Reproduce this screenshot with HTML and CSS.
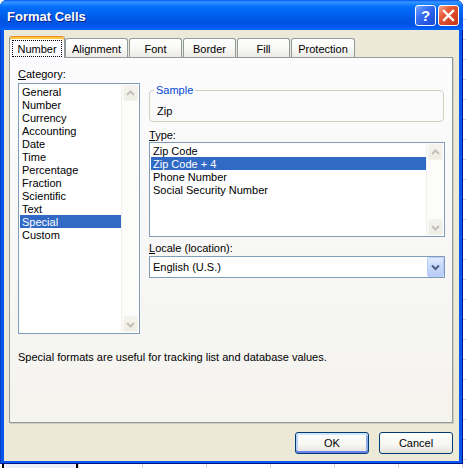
FILE: index.html
```html
<!DOCTYPE html>
<html>
<head>
<meta charset="utf-8">
<title>Format Cells</title>
<link rel="stylesheet" href="styles.css">
</head>
<body>
<div class="window">
  <div class="titlebar">
    <span class="title">Format Cells</span>
    <div class="tb-buttons">
      <span class="tb-btn help">?</span>
      <span class="tb-btn close"><svg width="19" height="19" viewBox="0 0 19 19"><path d="M5 5 L14 14 M14 5 L5 14" stroke="#fff" stroke-width="2.4" stroke-linecap="square"/></svg></span>
    </div>
  </div>
  <div class="frame">
    <div class="tabs">
      <div class="tab selected"><span class="focus">Number</span></div>
      <div class="tab t-align">Alignment</div>
      <div class="tab t-font">Font</div>
      <div class="tab t-border">Border</div>
      <div class="tab t-fill">Fill</div>
      <div class="tab t-prot">Protection</div>
    </div>
    <div class="panel">
      <div class="columns">
        <div class="col-left">
          <div class="label gap3"><u>C</u>ategory:</div>
          <div class="listbox cat">
            <ul class="items">
              <li>General</li>
              <li>Number</li>
              <li>Currency</li>
              <li>Accounting</li>
              <li>Date</li>
              <li>Time</li>
              <li>Percentage</li>
              <li>Fraction</li>
              <li>Scientific</li>
              <li>Text</li>
              <li class="sel">Special</li>
              <li>Custom</li>
            </ul>
            <div class="scroll">
              <span class="sbtn"><svg width="13" height="13" viewBox="0 0 13 13"><path d="M3 8 L6.5 4.5 L10 8" fill="none" stroke="#C3C1B5" stroke-width="2"/></svg></span>
              <span class="sbtn"><svg width="13" height="13" viewBox="0 0 13 13"><path d="M3 5 L6.5 8.5 L10 5" fill="none" stroke="#C3C1B5" stroke-width="2"/></svg></span>
            </div>
          </div>
        </div>
        <div class="col-right">
          <fieldset class="sample">
            <legend>Sample</legend>
            <div class="sample-val">Zip</div>
          </fieldset>
          <div class="label type-label"><u>T</u>ype:</div>
          <div class="listbox type">
            <ul class="items">
              <li>Zip Code</li>
              <li class="sel">Zip Code + 4</li>
              <li>Phone Number</li>
              <li>Social Security Number</li>
            </ul>
            <div class="scroll">
              <span class="sbtn"><svg width="13" height="13" viewBox="0 0 13 13"><path d="M3 8 L6.5 4.5 L10 8" fill="none" stroke="#C3C1B5" stroke-width="2"/></svg></span>
              <span class="sbtn"><svg width="13" height="13" viewBox="0 0 13 13"><path d="M3 5 L6.5 8.5 L10 5" fill="none" stroke="#C3C1B5" stroke-width="2"/></svg></span>
            </div>
          </div>
          <div class="label locale-label"><u>L</u>ocale (location):</div>
          <div class="combo">
            <span class="combo-text">English (U.S.)</span>
            <span class="dd"><svg width="15" height="18" viewBox="0 0 15 18"><path d="M4 7.5 L7.5 11 L11 7.5" fill="none" stroke="#4D6185" stroke-width="2"/></svg></span>
          </div>
        </div>
      </div>
      <p class="desc">Special formats are useful for tracking list and database values.</p>
    </div>
    <div class="actions">
      <span class="btn default">OK</span>
      <span class="btn">Cancel</span>
    </div>
  </div>
</div>
<div class="sheet"></div>
</body>
</html>
```
FILE: styles.css
```css
* { box-sizing: border-box; }
html, body { margin: 0; padding: 0; }
body {
  width: 466px;
  height: 468px;
  overflow: hidden;
  background: repeating-linear-gradient(180deg, #ffffff 0 19px, #d8d8d8 19px 20px);
  font-family: "Liberation Sans", Arial, sans-serif;
  font-size: 11px;
  color: #000;
}
.window {
  width: 463px;
  height: 464px;
  display: flex;
  flex-direction: column;
  background: #0655EC;
  border-radius: 7px 7px 0 0;
  overflow: hidden;
  box-shadow: inset 1px 0 #0A3DC8, inset -1px 0 #00138C, inset 0 -1px #00138C;
}
.titlebar {
  height: 30px;
  flex: none;
  display: flex;
  justify-content: space-between;
  padding: 0 4px 0 7px;
  background: linear-gradient(180deg, #0058EE 0px, #3A93FF 2px, #288EFF 3px, #127DFF 5px, #036FFC 7px, #0262EE 14px, #0057E5 19px, #0054E3 23px, #0055EB 26px, #005BF5 28px, #026AFE 29px, #0062EF 30px);
}
.title {
  padding-top: 9px;
  line-height: 15px;
  font-size: 13px;
  font-weight: bold;
  color: #fff;
  text-shadow: 1px 1px #0A1E8A;
}
.tb-buttons {
  display: flex;
  gap: 2px;
  padding-top: 5px;
}
.tb-btn {
  width: 21px;
  height: 21px;
  border: 1px solid #fff;
  border-radius: 3px;
  display: flex;
  align-items: center;
  justify-content: center;
}
.help {
  background: linear-gradient(135deg, #7BA8FF 0%, #3A72F2 35%, #2458E4 70%, #1B4AD0 100%);
  color: #fff;
  font-weight: bold;
  font-size: 15px;
  line-height: 19px;
}
.close {
  background: linear-gradient(135deg, #F6A78B 0%, #E45A38 35%, #D64424 70%, #C2361A 100%);
}
.frame {
  flex: 1;
  margin: 0 4px 3px 4px;
  background: #ECE9D8;
  padding: 6px 0 0 5px;
}
.tabs {
  display: flex;
  align-items: flex-end;
  height: 21px;
}
.tab {
  height: 19px;
  border: 1px solid #919B9C;
  border-bottom: 0;
  border-radius: 3px 3px 0 0;
  background: linear-gradient(180deg, #FFFFFF 0%, #FAFAF8 45%, #ECEBE5 100%);
  text-align: center;
  padding-top: 4px;
  line-height: 13px;
  margin-left: 1px;
  white-space: nowrap;
}
.tab.selected {
  position: relative;
  z-index: 1;
  width: 56px;
  height: 22px;
  margin: 0 0 -1px 0;
  background: #FCFCFE;
  border-top-color: #E68B2C;
  box-shadow: inset 0 2px #FFC73C;
  padding-top: 3px;
}
.focus {
  display: inline-block;
  border: 1px dotted #000;
  line-height: 14px;
  padding: 1px 4px 0 4px;
}
.t-align { width: 63px; margin-left: 0; }
.t-font { width: 53px; }
.t-border { width: 53px; }
.t-fill { width: 53px; }
.t-prot { width: 64px; }
.panel {
  width: 444px;
  height: 366px;
  border: 1px solid #919B9C;
  background: linear-gradient(180deg, #FCFCFE 0%, #F4F3EE 100%);
  box-shadow: 1px 1px 0 #D0CEC0;
  padding: 9px 7px 0 8px;
}
.columns {
  display: flex;
  gap: 9px;
}
.col-left { width: 122px; }
.col-right { width: 296px; }
.label {
  line-height: 13px;
  height: 13px;
  padding-top: 1px;
  white-space: nowrap;
}
.gap3 { margin-bottom: 3px; }
.listbox {
  border: 1px solid #7F9DB9;
  background: #fff;
  padding: 1px;
  display: flex;
}
.listbox.cat { height: 251px; }
.listbox.type { height: 95px; }
.items {
  list-style: none;
  margin: 0;
  padding: 0;
  flex: 1;
}
.items li {
  line-height: 13px;
  height: 13px;
  padding: 1px 0 0 2px;
  white-space: nowrap;
}
.items li.sel {
  background: #316AC5;
  color: #fff;
}
.scroll {
  width: 17px;
  display: flex;
  flex-direction: column;
  justify-content: space-between;
  background: #FCFCFA;
  border-left: 1px solid #F1F0EA;
}
.sbtn {
  width: 15px;
  height: 16px;
  margin-left: 1px;
  border: 1px solid #F4F3EE;
  border-radius: 2px;
  background: linear-gradient(180deg, #F4F3EE 0%, #EDECE5 100%);
  display: flex;
  align-items: center;
  justify-content: center;
}
.sample {
  width: 295px;
  margin: 17px 0 0 0;
  border: 1px solid #D0D0BF;
  border-radius: 4px;
  padding: 7px 6px 4px 7px;
}
.sample legend {
  color: #0046D5;
  line-height: 13px;
  padding: 0 2px;
  margin-left: -3px;
}
.sample-val { line-height: 13px; height: 13px; padding-top: 1px; }
.type-label { margin: 6px 0 1px 0; }
.locale-label { margin: 4px 0 2px 0; }
.combo {
  height: 22px;
  border: 1px solid #7F9DB9;
  background: #fff;
  display: flex;
  align-items: center;
  padding-left: 3px;
}
.combo-text { flex: 1; line-height: 13px; padding-top: 1px; }
.dd {
  width: 17px;
  height: 20px;
  border: 1px solid #B6CCF8;
  border-radius: 2px;
  background: linear-gradient(180deg, #E3ECFD 0%, #CBDAFB 40%, #B9CCF6 100%);
  display: flex;
  align-items: center;
  justify-content: center;
}
.desc {
  margin: 16px 0 0 0;
  line-height: 13px;
  padding-top: 1px;
  white-space: nowrap;
}
.actions {
  width: 444px;
  margin-top: 9px;
  display: flex;
  justify-content: flex-end;
  gap: 10px;
}
.btn {
  width: 74px;
  height: 22px;
  border: 1px solid #003C74;
  border-radius: 3px;
  background: linear-gradient(180deg, #FFFFFF 0%, #F6F6F2 60%, #E3E0D6 100%);
  display: flex;
  align-items: center;
  justify-content: center;
  line-height: 13px;
}
.btn.default {
  box-shadow: inset 0 2px #CEE7FF, inset 0 -2px #6982EE, inset 2px 0 #B8D2F8, inset -2px 0 #89ADE4;
}
.sheet {
  width: 466px;
  height: 4px;
  background:
    linear-gradient(90deg, #fff 0 2px, #000 2px 4px, #EAEEF6 4px 76px, #000 76px 78px, transparent 78px),
    repeating-linear-gradient(90deg, #fff 0 14px, #D4D4D4 14px 15px, #fff 15px 64px);
}
```
